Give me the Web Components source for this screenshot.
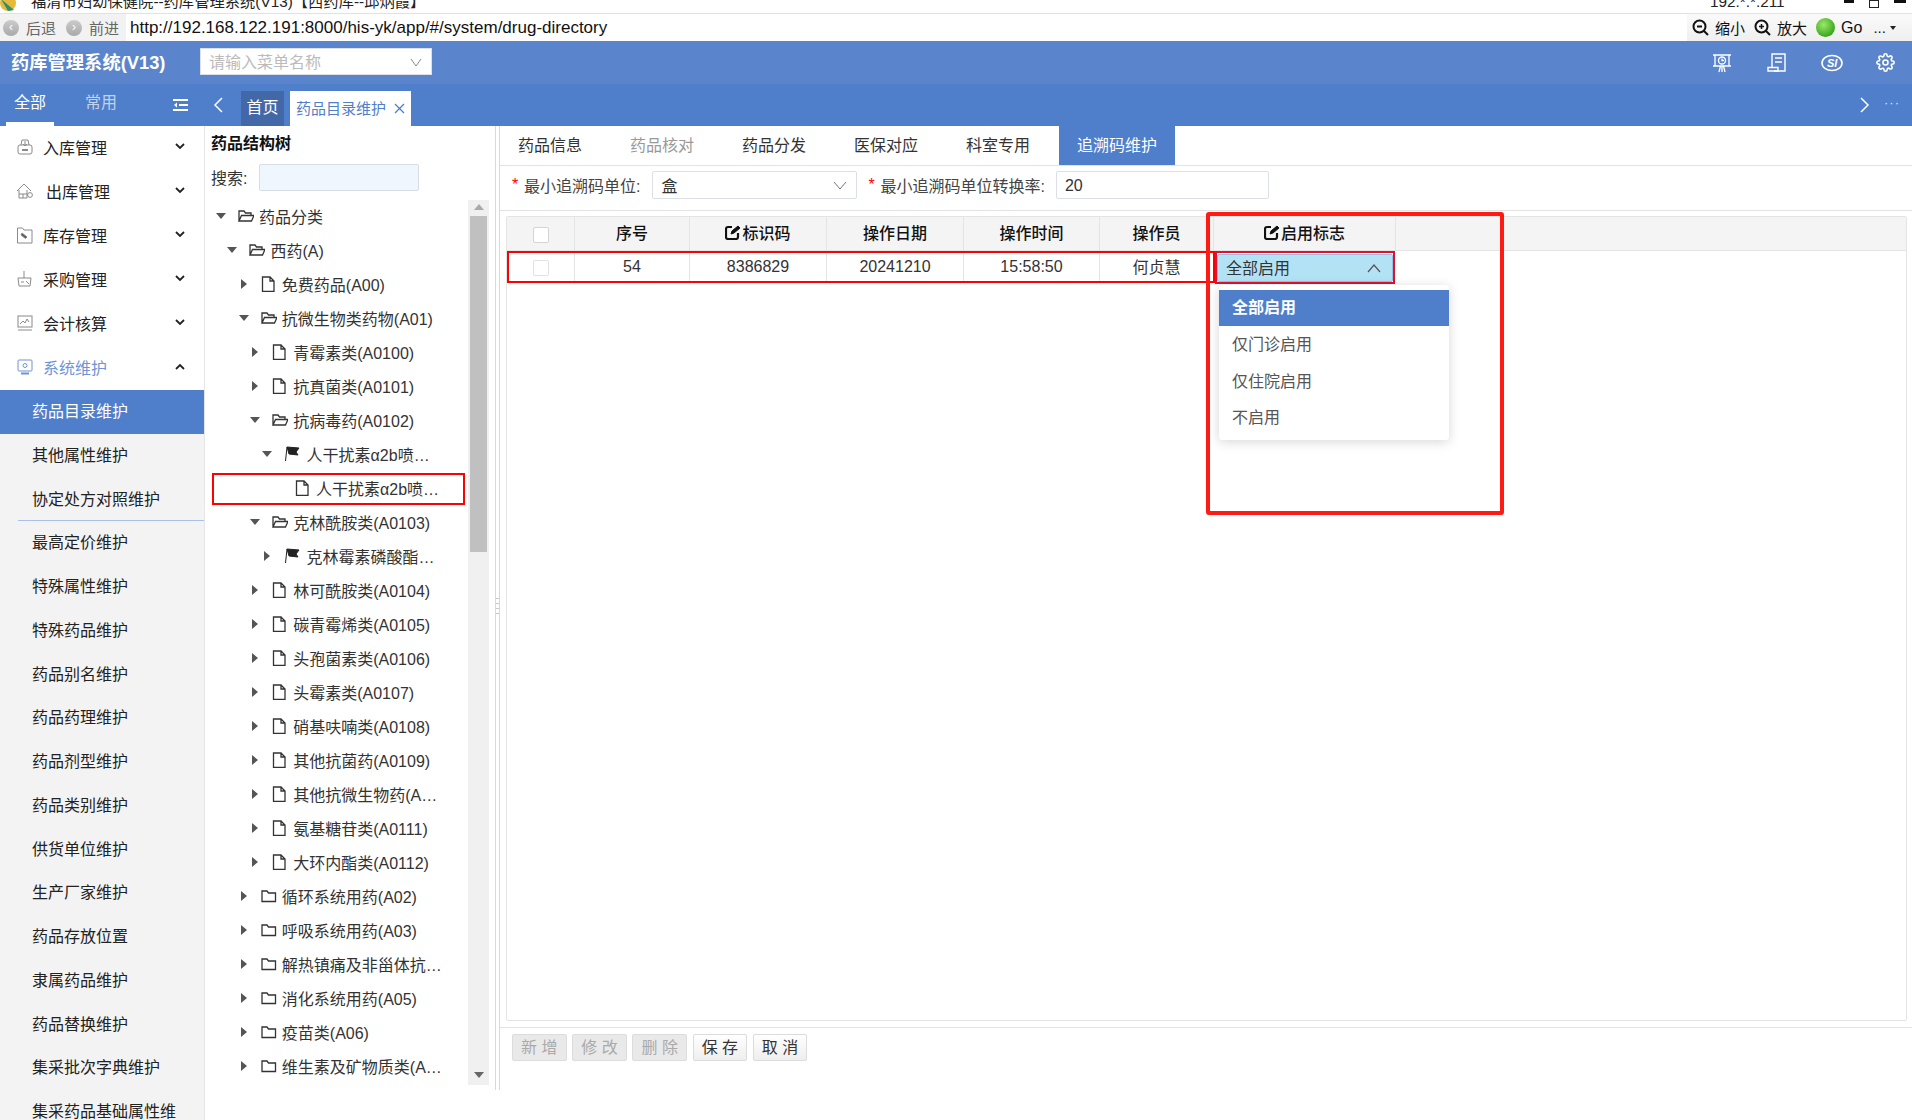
<!DOCTYPE html>
<html lang="zh">
<head>
<meta charset="utf-8">
<title>药库管理系统</title>
<style>
  html, body { margin: 0; height: 100%; }
  body {
    height: 1120px;
    overflow: hidden;
    display: flex;
    flex-direction: column;
    font: 16px "Liberation Sans", "Noto Sans CJK SC", sans-serif;
    color: #333;
    background: #fff;
  }
  .work { flex: 1; display: flex; min-height: 0; }
</style>
</head>
<body>
  <browser-bar></browser-bar>
  <app-header></app-header>
  <tab-strip></tab-strip>
  <div class="work">
    <side-menu>
      <menu-row icon="inbox">入库管理</menu-row>
      <menu-row icon="house" shift>出库管理</menu-row>
      <menu-row icon="doc">库存管理</menu-row>
      <menu-row icon="basket">采购管理</menu-row>
      <menu-row icon="chart">会计核算</menu-row>
      <menu-row icon="screen" open>系统维护</menu-row>
      <sub-row active>药品目录维护</sub-row>
      <sub-row>其他属性维护</sub-row>
      <sub-row line>协定处方对照维护</sub-row>
      <sub-row>最高定价维护</sub-row>
      <sub-row>特殊属性维护</sub-row>
      <sub-row>特殊药品维护</sub-row>
      <sub-row>药品别名维护</sub-row>
      <sub-row>药品药理维护</sub-row>
      <sub-row>药品剂型维护</sub-row>
      <sub-row>药品类别维护</sub-row>
      <sub-row>供货单位维护</sub-row>
      <sub-row>生产厂家维护</sub-row>
      <sub-row>药品存放位置</sub-row>
      <sub-row>隶属药品维护</sub-row>
      <sub-row>药品替换维护</sub-row>
      <sub-row>集采批次字典维护</sub-row>
      <sub-row>集采药品基础属性维</sub-row>
    </side-menu>
    <drug-tree>
      <tree-node level="0" caret="down" icon="open">药品分类</tree-node>
      <tree-node level="1" caret="down" icon="open">西药(A)</tree-node>
      <tree-node level="2" caret="right" icon="file">免费药品(A00)</tree-node>
      <tree-node level="2" caret="down" icon="open">抗微生物类药物(A01)</tree-node>
      <tree-node level="3" caret="right" icon="file">青霉素类(A0100)</tree-node>
      <tree-node level="3" caret="right" icon="file">抗真菌类(A0101)</tree-node>
      <tree-node level="3" caret="down" icon="open">抗病毒药(A0102)</tree-node>
      <tree-node level="4" caret="down" icon="flag">人干扰素α2b喷…</tree-node>
      <tree-node level="5" icon="file" marked>人干扰素α2b喷…</tree-node>
      <tree-node level="3" caret="down" icon="open">克林酰胺类(A0103)</tree-node>
      <tree-node level="4" caret="right" icon="flag">克林霉素磷酸酯…</tree-node>
      <tree-node level="3" caret="right" icon="file">林可酰胺类(A0104)</tree-node>
      <tree-node level="3" caret="right" icon="file">碳青霉烯类(A0105)</tree-node>
      <tree-node level="3" caret="right" icon="file">头孢菌素类(A0106)</tree-node>
      <tree-node level="3" caret="right" icon="file">头霉素类(A0107)</tree-node>
      <tree-node level="3" caret="right" icon="file">硝基呋喃类(A0108)</tree-node>
      <tree-node level="3" caret="right" icon="file">其他抗菌药(A0109)</tree-node>
      <tree-node level="3" caret="right" icon="file">其他抗微生物药(A…</tree-node>
      <tree-node level="3" caret="right" icon="file">氨基糖苷类(A0111)</tree-node>
      <tree-node level="3" caret="right" icon="file">大环内酯类(A0112)</tree-node>
      <tree-node level="2" caret="right" icon="folder">循环系统用药(A02)</tree-node>
      <tree-node level="2" caret="right" icon="folder">呼吸系统用药(A03)</tree-node>
      <tree-node level="2" caret="right" icon="folder">解热镇痛及非甾体抗…</tree-node>
      <tree-node level="2" caret="right" icon="folder">消化系统用药(A05)</tree-node>
      <tree-node level="2" caret="right" icon="folder">疫苗类(A06)</tree-node>
      <tree-node level="2" caret="right" icon="folder">维生素及矿物质类(A…</tree-node>
    </drug-tree>
    <split-bar></split-bar>
    <trace-panel>
      <trace-grid></trace-grid>
      <tool-button slot="tools" disabled>新 增</tool-button>
      <tool-button slot="tools" disabled>修 改</tool-button>
      <tool-button slot="tools" disabled>删 除</tool-button>
      <tool-button slot="tools">保 存</tool-button>
      <tool-button slot="tools">取 消</tool-button>
    </trace-panel>
  </div>

<script>
const icons = {
  inbox: '<rect x="2" y="7" width="14" height="9" rx="2"/><path d="M5 7 6 2h6l1 5M9 3v5M7 6l2 2 2-2"/><path d="M6 12h6" stroke-width="2"/>',
  house: '<path d="M1 9 8 2l7 7M3 8v8h8V8M3 12h8M7 12v4"/><circle cx="14" cy="13" r="2.4"/>',
  doc: '<path d="M1.5 2h5l1.5 2h8v13h-14.500z"/><path d="M6 7l5 4-1.500 1.500-4.500-3.500z" fill="#555"/>',
  basket: '<path d="M8 1v7M2 8h13l-1 8H3zM5 12h3M10 11l3 3"/>',
  chart: '<rect x="2" y="2" width="14" height="11"/><path d="M2 16h14M4 10l3-3 2 2 2-4 2 3"/>',
  screen: '<rect x="2" y="2" width="14" height="11" rx="1"/><circle cx="9" cy="7.500" r="2"/><path d="M5 15.500h8" stroke-width="2"/>',
  file: '<path d="M1.500 1h7.500l4 4v10.500h-11.500zM9 1v4h4"/>',
  folder: '<path d="M1 3h5l1.500 2H14.500v8.500H1z"/>',
  open: '<path d="M1 13V3h5l1.500 2H13v2.500M1 13l2.500-5.500H16l-2.500 5.500z"/>',
};

function svgIcon(name, size, color, width) {
  return `<svg width="${size}" height="${size}" viewBox="0 0 ${size} ${size}" fill="none" stroke="${color}" stroke-width="${width || 1}">${icons[name] || ''}</svg>`;
}

const barTemplate = document.createElement('template');
barTemplate.innerHTML = `
  <style>
    :host { display: block; height: 41px; flex: none; background: #fff; color: #222; overflow: hidden; }
    .title {
      height: 13px; border-bottom: 1px solid #e2e2e2; overflow: hidden;
      display: flex; padding-left: 31px; position: relative; font-size: 15.300px;
    }
    .title span { margin-top: -7px; line-height: 18px; white-space: nowrap; }
    .logo { position: absolute; left: 0; top: -5px; }
    .ip { margin-left: auto; width: 134px; }
    .win { width: 68px; display: flex; gap: 15px; margin-top: -2px; }
    .win i { display: block; width: 10px; height: 8px; box-sizing: border-box; }
    .nav { display: flex; align-items: center; height: 27px; }
    .back {
      width: 126px; height: 27px; background: #f2f2f2; color: #666; font-size: 15px; white-space: nowrap;
      display: flex; align-items: center; box-sizing: border-box; padding-left: 3px; flex: none;
    }
    .back b { flex: none; width: 16px; height: 16px; border-radius: 50%; background: linear-gradient(#ccc, #a9a9a9); color: #fff; font: 12px/15px "Liberation Sans", sans-serif; text-align: center; margin-right: 7px; }
    .back span { margin-right: 10px; }
    .url { margin-left: 4px; font-size: 17px; color: #111; white-space: nowrap; }
    .tools {
      margin-left: auto; width: 225px; height: 27px; background: linear-gradient(#fafafa, #efefef);
      display: flex; align-items: center; box-sizing: border-box; padding-left: 5px; font-size: 15px; color: #111; white-space: nowrap;
    }
    .tools svg { flex: none; margin-right: 6px; }
    .tools span { margin-right: 9px; }
    .ball { width: 19px; height: 19px; border-radius: 50%; background: radial-gradient(circle at 40% 35%, #9be86a, #3ca81c 70%); margin-right: 6px; flex: none; }
    .go { font-size: 16px; }
    .caret { width: 0; height: 0; border: 3px solid transparent; border-top: 4px solid #222; margin: 3px 0 0 4px; }
  </style>
  <div class="title">
    <svg class="logo" width="18" height="18" viewBox="0 0 18 18"><circle cx="8" cy="8" r="8" fill="#e6b93a"/><path d="M1 4 14 15 8 16z" fill="#2d8f6b"/></svg>
    <span>福清市妇幼保健院--药库管理系统(V13)【西药库--邱炳霞】</span>
    <span class="ip">192.*.*.211</span>
    <div class="win"><i style="height:3px;background:#111;margin-top:2px"></i><i style="border:1px solid #222;margin-top:2px"></i><i style="width:12px;border-top:3px solid #111;margin-top:2px"></i></div>
  </div>
  <div class="nav">
    <div class="back"><b>‹</b><span>后退</span><b>›</b><span>前进</span></div>
    <div class="url">http://192.168.122.191:8000/his-yk/app/#/system/drug-directory</div>
    <div class="tools">
      <svg width="17" height="17" viewBox="0 0 17 17" fill="none" stroke="#111" stroke-width="2"><circle cx="7.500" cy="7.500" r="6"/><path d="M12 12l4 4M5 7.500h5" /></svg><span>缩小</span>
      <svg width="17" height="17" viewBox="0 0 17 17" fill="none" stroke="#111" stroke-width="2"><circle cx="7.500" cy="7.500" r="6"/><path d="M12 12l4 4"/><path d="M5 7.500h5M7.500 5v5" stroke-width="1.500"/></svg><span>放大</span>
      <div class="ball"></div><span class="go">Go</span><span style="margin:0 0 0 2px">...</span><div class="caret"></div>
    </div>
  </div>
`;

class BrowserBar extends HTMLElement {
  constructor() {
    super();
    this.attachShadow({ mode: 'open' }).appendChild(barTemplate.content.cloneNode(true));
  }
}

const headerTemplate = document.createElement('template');
headerTemplate.innerHTML = `
  <style>
    :host { display: flex; align-items: center; height: 43px; flex: none; background: #5a85cd; color: #fff; }
    h1 { margin: -4px 0 0 11px; width: 189px; flex: none; font-size: 18.300px; white-space: nowrap; }
    .search {
      width: 232px; height: 27px; box-sizing: border-box; background: #fff; border: 1px solid #dcdfe6;
      color: #bbb; padding: 0 0 2px 8px; display: flex; align-items: center; justify-content: space-between; margin-top: -2px;
    }
    .search svg { margin-right: 8px; margin-top: 2px; }
    .right { margin-left: auto; display: flex; }
    .right div { width: 55px; display: flex; justify-content: center; }
    .right div:last-child { width: 53px; }
    text { font: italic bold 11px "Liberation Sans", sans-serif; fill: #fff; stroke: none; }
  </style>
  <h1>药库管理系统(V13)</h1>
  <div class="search">请输入菜单名称
    <svg width="14" height="14" viewBox="0 0 14 14" fill="none" stroke="#888"><path d="M2 4l5 7 5-7"/></svg>
  </div>
  <div class="right">
    <div><svg width="20" height="20" viewBox="0 0 20 20" fill="none" stroke="#fff" stroke-width="1.300"><path d="M1 2h18M3 2v11h14V2M1 13h18"/><circle cx="10" cy="7.500" r="3.500"/><path d="M10 5.500v2h2M8.500 13 7 19M10 13v6M11.500 13l1.500 6"/></svg></div>
    <div><svg width="20" height="20" viewBox="0 0 20 20" fill="none" stroke="#fff" stroke-width="1.400"><path d="M5 14V1h13v17H7M8 5h7M8 9h7"/><path d="M1 18v-3.500h10V18z"/></svg></div>
    <div><svg width="22" height="20" viewBox="0 0 22 20" fill="none" stroke="#fff" stroke-width="1.600"><ellipse cx="11" cy="10" rx="10" ry="7.500"/><text x="6" y="14">SI</text></svg></div>
    <div><svg width="19" height="19" viewBox="0 0 24 24" fill="none" stroke="#fff" stroke-width="2"><circle cx="12" cy="12" r="3.200"/><path d="M19.400 15a1.650 1.650 0 0 0 .33 1.820l.06.06a2 2 0 0 1 0 2.830 2 2 0 0 1-2.830 0l-.06-.06a1.650 1.650 0 0 0-1.820-.33 1.650 1.650 0 0 0-1 1.510V21a2 2 0 0 1-2 2 2 2 0 0 1-2-2v-.09A1.650 1.650 0 0 0 9 19.400a1.650 1.650 0 0 0-1.820.33l-.06.06a2 2 0 0 1-2.830 0 2 2 0 0 1 0-2.830l.06-.06a1.650 1.650 0 0 0 .33-1.820 1.650 1.650 0 0 0-1.510-1H3a2 2 0 0 1-2-2 2 2 0 0 1 2-2h.09A1.650 1.650 0 0 0 4.600 9a1.650 1.650 0 0 0-.33-1.820l-.06-.06a2 2 0 0 1 0-2.830 2 2 0 0 1 2.830 0l.06.06a1.650 1.650 0 0 0 1.820.33H9a1.650 1.650 0 0 0 1-1.510V3a2 2 0 0 1 2-2 2 2 0 0 1 2 2v.09a1.650 1.650 0 0 0 1 1.510 1.650 1.650 0 0 0 1.820-.33l.06-.06a2 2 0 0 1 2.830 0 2 2 0 0 1 0 2.830l-.06.06a1.650 1.650 0 0 0-.33 1.820V9a1.650 1.650 0 0 0 1.510 1H21a2 2 0 0 1 2 2 2 2 0 0 1-2 2h-.09a1.650 1.650 0 0 0-1.510 1z"/></svg></div>
  </div>
`;

class AppHeader extends HTMLElement {
  constructor() {
    super();
    this.attachShadow({ mode: 'open' }).appendChild(headerTemplate.content.cloneNode(true));
  }
}

const stripTemplate = document.createElement('template');
stripTemplate.innerHTML = `
  <style>
    :host { display: flex; height: 42px; flex: none; background: #4f7ecb; color: #fff; }
    .mode { width: 48px; height: 38px; margin-left: 6px; text-align: center; line-height: 38px; border-bottom: 4px solid #fff; }
    .mode.off { margin-left: 23px; border-color: transparent; color: #c3d3ec; }
    .fold { margin: 14px 0 0 48px; }
    .prev { margin: 13px 0 0 25px; }
    .tab { height: 35px; line-height: 33px; margin-top: 7px; flex: none; box-sizing: border-box; }
    .home { width: 43px; margin-left: 18px; background: #4368a8; text-align: center; }
    .cur { width: 121px; margin-left: 6px; background: #fff; color: #4f7ecb; padding-left: 6px; display: flex; align-items: center; gap: 8px; font-size: 15px; }
    .right { margin-left: auto; display: flex; align-items: center; }
    .dots { margin: 0 12px 6px 14px; letter-spacing: 1px; font-size: 13px; color: #dde6f5; }
  </style>
  <div class="mode">全部</div>
  <div class="mode off">常用</div>
  <svg class="fold" width="15" height="14" viewBox="0 0 15 14" fill="none" stroke="#fff" stroke-width="2"><path d="M0 2h15M6 7h9M0 12h15"/><path d="M4 4.500 1 7l3 2.500z" fill="#fff" stroke="none"/></svg>
  <svg class="prev" width="10" height="16" viewBox="0 0 10 16" fill="none" stroke="#fff" stroke-width="1.500"><path d="M9 1 2 8l7 7"/></svg>
  <div class="tab home">首页</div>
  <div class="tab cur">药品目录维护
    <svg width="11" height="11" viewBox="0 0 11 11" fill="none" stroke="#4f7ecb" stroke-width="1.300"><path d="M1 1l9 9M10 1l-9 9"/></svg>
  </div>
  <div class="right">
    <svg width="10" height="16" viewBox="0 0 10 16" fill="none" stroke="#fff" stroke-width="1.500"><path d="M1 1l7 7-7 7"/></svg>
    <span class="dots">···</span>
  </div>
`;

class TabStrip extends HTMLElement {
  constructor() {
    super();
    this.attachShadow({ mode: 'open' }).appendChild(stripTemplate.content.cloneNode(true));
  }
}

const sideTemplate = document.createElement('template');
sideTemplate.innerHTML = `
  <style>
    :host { display: block; width: 205px; flex: none; box-sizing: border-box; border-right: 1px solid #e6e6e6; overflow: hidden; color: #222; }
  </style>
  <slot></slot>
`;

class SideMenu extends HTMLElement {
  constructor() {
    super();
    this.attachShadow({ mode: 'open' }).appendChild(sideTemplate.content.cloneNode(true));
  }
}

const rowTemplate = document.createElement('template');
rowTemplate.innerHTML = `
  <style>
    :host { display: flex; align-items: center; height: 44px; padding: 0 0 2px 16px; box-sizing: border-box; }
    :host([open]) { color: #6f93d6; }
    #icon { width: 27px; height: 18px; flex: none; }
    :host([shift]) #icon { width: 30px; }
    .chev { margin-left: auto; margin-right: 19px; margin-top: -2px; }
    :host([open]) .chev { transform: rotate(180deg); }
  </style>
  <span id="icon"></span>
  <slot></slot>
  <svg class="chev" width="10" height="7" viewBox="0 0 10 7" fill="none" stroke="#222" stroke-width="1.800"><path d="M1 1l4 4 4-4"/></svg>
`;

class MenuRow extends HTMLElement {
  constructor() {
    super();
    this.attachShadow({ mode: 'open' }).appendChild(rowTemplate.content.cloneNode(true));
  }

  connectedCallback() {
    const color = this.hasAttribute('open') ? '#6f93d6' : '#8a8a8a';
    this.shadowRoot.querySelector('#icon').innerHTML = svgIcon(this.getAttribute('icon'), 18, color);
  }
}

const subTemplate = document.createElement('template');
subTemplate.innerHTML = `
  <style>
    :host { display: block; height: 43.750px; line-height: 43.750px; padding-left: 32px; background: #f3f3f3; position: relative; white-space: nowrap; }
    :host([active]) { background: #4f7ecb; color: #fff; }
    :host([line])::after { content: ""; position: absolute; left: 18px; right: 0; bottom: 0; height: 1px; background: #a9c0e8; }
  </style>
  <slot></slot>
`;

class SubRow extends HTMLElement {
  constructor() {
    super();
    this.attachShadow({ mode: 'open' }).appendChild(subTemplate.content.cloneNode(true));
  }
}

const treeTemplate = document.createElement('template');
treeTemplate.innerHTML = `
  <style>
    :host { display: flex; flex-direction: column; width: 290px; flex: none; box-sizing: border-box; }
    h2 { margin: 0; font-size: 16px; color: #111; padding: 9px 0 0 6px; height: 25px; line-height: 18px; }
    .search { display: flex; align-items: center; height: 27px; margin-top: 4px; padding-left: 6px; color: #333; }
    .search span { width: 48px; margin-top: -2px; }
    .search i { display: block; width: 160px; height: 27px; box-sizing: border-box; background: #eff6fd; border: 1px solid #d8dde4; border-radius: 2px; }
    .body { display: flex; margin-top: 9px; height: 885px; }
    .list { flex: 1; min-width: 0; overflow: hidden; }
    .bar { width: 21px; margin-right: 6px; background: #f0f0f0; display: flex; flex-direction: column; align-items: center; flex: none; }
    .thumb { width: 17px; height: 336px; background: #c0c0c0; }
    .up, .down { width: 0; height: 0; border: 5px solid transparent; }
    .up { border-bottom: 6px solid #aaa; margin-top: 4px; margin-bottom: 6px; border-top-width: 0; }
    .down { border-top: 6px solid #666; border-bottom-width: 0; margin-top: auto; margin-bottom: 7px; }
  </style>
  <h2>药品结构树</h2>
  <div class="search"><span>搜索:</span><i></i></div>
  <div class="body">
    <div class="list"><slot></slot></div>
    <div class="bar"><div class="up"></div><div class="thumb"></div><div class="down"></div></div>
  </div>
`;

class DrugTree extends HTMLElement {
  constructor() {
    super();
    this.attachShadow({ mode: 'open' }).appendChild(treeTemplate.content.cloneNode(true));
  }
}

const nodeTemplate = document.createElement('template');
nodeTemplate.innerHTML = `
  <style>
    :host { display: flex; align-items: center; height: 34px; padding-bottom: 2px; box-sizing: border-box; position: relative; white-space: nowrap; color: #333; }
    :host([marked])::after { content: ""; position: absolute; left: 7px; width: 253px; top: 1px; height: 32px; box-sizing: border-box; border: 2px solid #f00; }
    #caret { width: 10px; flex: none; display: flex; justify-content: center; margin-right: 12px; }
    #kind { width: 14px; height: 16px; flex: none; margin-right: 7px; }
    .flag { margin-right: 9px !important; }
  </style>
  <span id="caret"></span>
  <span id="kind"></span>
  <slot></slot>
`;

class TreeNode extends HTMLElement {
  constructor() {
    super();
    this.attachShadow({ mode: 'open' }).appendChild(nodeTemplate.content.cloneNode(true));
  }

  connectedCallback() {
    const shadow = this.shadowRoot;
    const level = Number(this.getAttribute('level'));
    shadow.querySelector('#caret').style.marginLeft = (11 + level * 11.4) + 'px';

    const caret = this.getAttribute('caret');
    if (caret === 'down') {
      shadow.querySelector('#caret').innerHTML = '<svg width="10" height="6" viewBox="0 0 10 6"><path d="M0 0h10L5 6z" fill="#555"/></svg>';
    } else if (caret === 'right') {
      shadow.querySelector('#caret').innerHTML = '<svg width="6" height="10" viewBox="0 0 6 10"><path d="M0 0v10l6-5z" fill="#555"/></svg>';
    }

    const kind = shadow.querySelector('#kind');
    const icon = this.getAttribute('icon');
    if (icon === 'flag') {
      kind.classList.add('flag');
      kind.innerHTML = '<svg width="16" height="16" viewBox="0 0 16 16"><path d="M3 1l12 1-3 4 2 3-9-1zM3 1 1.500 15" fill="#222" stroke="#222"/></svg>';
    } else {
      kind.innerHTML = `<svg width="16" height="16" viewBox="0 0 16 16" fill="none" stroke="#333" stroke-width="1.300">${icons[icon]}</svg>`;
    }
  }
}

const splitTemplate = document.createElement('template');
splitTemplate.innerHTML = `
  <style>
    :host { display: flex; flex-direction: column; justify-content: center; width: 5px; height: 964px; flex: none; box-sizing: border-box; border-left: 1px solid #d9d9d9; border-right: 1px solid #d9d9d9; }
    i { display: block; height: 1px; background: #c8c8c8; margin-bottom: 4px; }
  </style>
  <i></i><i></i><i></i><i></i>
`;

class SplitBar extends HTMLElement {
  constructor() {
    super();
    this.attachShadow({ mode: 'open' }).appendChild(splitTemplate.content.cloneNode(true));
  }
}

const panelTemplate = document.createElement('template');
panelTemplate.innerHTML = `
  <style>
    :host { display: flex; flex-direction: column; flex: 1; min-width: 0; position: relative; }
    .tabs { display: flex; gap: 12px; height: 39px; border-bottom: 1px solid #e4e4e4; flex: none; }
    .tabs div { padding: 0 18px; line-height: 39px; color: #333; }
    .tabs .off { color: #999; }
    .tabs .on { background: #4f7ecb; color: #fff; margin-left: -1px; }
    .form { display: flex; height: 39px; padding-top: 5px; border-bottom: 1px solid #e4e4e4; flex: none; }
    label { display: flex; height: 28px; align-items: center; white-space: nowrap; color: #444; }
    label b { color: #f00; font-weight: normal; width: 12px; }
    .unit { width: 205px; height: 28px; margin-left: 12px; box-sizing: border-box; border: 1px solid #dcdfe6; border-radius: 2px; padding-left: 8px; display: flex; align-items: center; justify-content: space-between; }
    .unit svg { margin-right: 9px; }
    .rate { width: 213px; height: 28px; margin-left: 11px; box-sizing: border-box; border: 1px solid #dcdfe6; border-radius: 2px; padding-left: 8px; line-height: 27px; }
    .grid { height: 805px; margin: 5px 5px 0 6px; flex: none; box-sizing: border-box; border: 1px solid #e4e4e4; border-radius: 2px; }
    .tools { display: flex; margin-top: 6px; padding: 6px 0 0 12px; gap: 5.600px; border-top: 1px solid #e4e4e4; }
    .annot { position: absolute; left: 706px; top: 86px; width: 298px; height: 303px; box-sizing: border-box; border: 4px solid #ff1a14; border-radius: 3px; pointer-events: none; }
  </style>
  <div class="tabs">
    <div>药品信息</div><div class="off">药品核对</div><div>药品分发</div><div>医保对应</div><div>科室专用</div><div class="on">追溯码维护</div>
  </div>
  <div class="form">
    <label style="margin-left:12px"><b>*</b>最小追溯码单位:</label>
    <div class="unit">盒<svg width="14" height="14" viewBox="0 0 14 14" fill="none" stroke="#777"><path d="M1 4l6 7 6-7"/></svg></div>
    <label style="margin-left:11px"><b>*</b>最小追溯码单位转换率:</label>
    <div class="rate">20</div>
  </div>
  <div class="grid"><slot></slot></div>
  <div class="tools"><slot name="tools"></slot></div>
  <div class="annot"></div>
`;

class TracePanel extends HTMLElement {
  constructor() {
    super();
    this.attachShadow({ mode: 'open' }).appendChild(panelTemplate.content.cloneNode(true));
  }
}

const editIcon = '<svg width="16" height="15" viewBox="0 0 16 15" fill="none" stroke="#111" stroke-width="2.200"><path d="M13 8v4a2 2 0 0 1-2 2H3a2 2 0 0 1-2-2V4a2 2 0 0 1 2-2h4"/><path d="M6 9l1-3 6-5 2 2-6 5z" fill="#111" stroke-width="1"/></svg>';

const gridTemplate = document.createElement('template');
gridTemplate.innerHTML = `
  <style>
    :host { display: block; color: #333; }
    .row { display: grid; grid-template-columns: 68px 115px 137px 137px 136px 114px 182px 1fr; position: relative; }
    .head { background: #f4f4f4; height: 33px; border-bottom: 1px solid #e4e4e4; color: #111; font-weight: 500; }
    .head .cell { padding-bottom: 3px; }
    .head .box { margin-top: 5px; }
    .body { height: 32px; }
    .cell { border-right: 1px solid #e4e4e4; display: flex; align-items: center; justify-content: center; gap: 1px; white-space: nowrap; box-sizing: border-box; }
    .cell:last-child { border-right: 0; }
    .body .cell { border-bottom: 1px solid #e4e4e4; }
    .body .filler { border: 0; }
    .box { width: 16px; height: 16px; box-sizing: border-box; background: #fff; border: 1px solid #d4d4d4; border-radius: 2px; }
    .mark { position: absolute; left: 0; top: 0; width: 708px; height: 32px; box-sizing: border-box; border: 2px solid #f00; pointer-events: none; }
    .pick { position: relative; justify-content: flex-start; border: 0 !important; }
    .value {
      margin: 2px 0 0 3px; width: 176px; height: 28px; box-sizing: border-box; background: #b3e2f5; border: 1px solid #9bbfe0; border-radius: 2px;
      display: flex; align-items: center; justify-content: space-between; padding: 0 0 2px 8px;
    }
    .value svg { margin: 2px 11px 0 0; }
    .ring { position: absolute; left: 1px; top: 0; width: 180px; height: 33px; box-sizing: border-box; border: 2px solid #e0102f; pointer-events: none; }
    .menu {
      position: absolute; left: 5px; top: 34px; width: 230px; height: 155px; box-sizing: border-box; padding: 5px 0; background: #fff; border-radius: 3px;
      box-shadow: 0 2px 12px rgba(0,0,0,.16); z-index: 2;
    }
    .menu div { height: 36.500px; line-height: 38px; padding-left: 13px; color: #555; }
    .menu .sel { height: 36px; line-height: 36px; background: #4f7ecb; color: #fff; font-weight: bold; }
  </style>
  <div class="row head">
    <div class="cell"><span class="box"></span></div>
    <div class="cell">序号</div>
    <div class="cell">${editIcon}标识码</div>
    <div class="cell">操作日期</div>
    <div class="cell">操作时间</div>
    <div class="cell">操作员</div>
    <div class="cell">${editIcon}启用标志</div>
    <div class="cell"></div>
  </div>
  <div class="row body">
    <div class="cell"><span class="box" style="border-color:#e2e2e2;margin-top:2px"></span></div>
    <div class="cell">54</div>
    <div class="cell">8386829</div>
    <div class="cell">20241210</div>
    <div class="cell">15:58:50</div>
    <div class="cell" style="padding-bottom:2px">何贞慧</div>
    <div class="cell pick">
      <div class="value">全部启用<svg width="14" height="9" viewBox="0 0 14 9" fill="none" stroke="#555" stroke-width="1.200"><path d="M1 8l6-7 6 7"/></svg></div>
      <div class="ring"></div>
      <div class="menu"><div class="sel">全部启用</div><div>仅门诊启用</div><div>仅住院启用</div><div>不启用</div></div>
    </div>
    <div class="cell filler"></div>
    <div class="mark"></div>
  </div>
`;

class TraceGrid extends HTMLElement {
  constructor() {
    super();
    this.attachShadow({ mode: 'open' }).appendChild(gridTemplate.content.cloneNode(true));
  }
}

const buttonTemplate = document.createElement('template');
buttonTemplate.innerHTML = `
  <style>
    :host { display: block; width: 54.600px; height: 27px; line-height: 25px; box-sizing: border-box; text-align: center; border: 1px solid #dcdcdc; border-radius: 2px; background: linear-gradient(#fff, #eee); color: #333; white-space: nowrap; }
    :host([disabled]) { background: #e9e9e9; color: #aaa; }
  </style>
  <slot></slot>
`;

class ToolButton extends HTMLElement {
  constructor() {
    super();
    this.attachShadow({ mode: 'open' }).appendChild(buttonTemplate.content.cloneNode(true));
  }
}

customElements.define('browser-bar', BrowserBar);
customElements.define('app-header', AppHeader);
customElements.define('tab-strip', TabStrip);
customElements.define('side-menu', SideMenu);
customElements.define('menu-row', MenuRow);
customElements.define('sub-row', SubRow);
customElements.define('drug-tree', DrugTree);
customElements.define('tree-node', TreeNode);
customElements.define('split-bar', SplitBar);
customElements.define('trace-panel', TracePanel);
customElements.define('trace-grid', TraceGrid);
customElements.define('tool-button', ToolButton);
</script>
</body>
</html>
